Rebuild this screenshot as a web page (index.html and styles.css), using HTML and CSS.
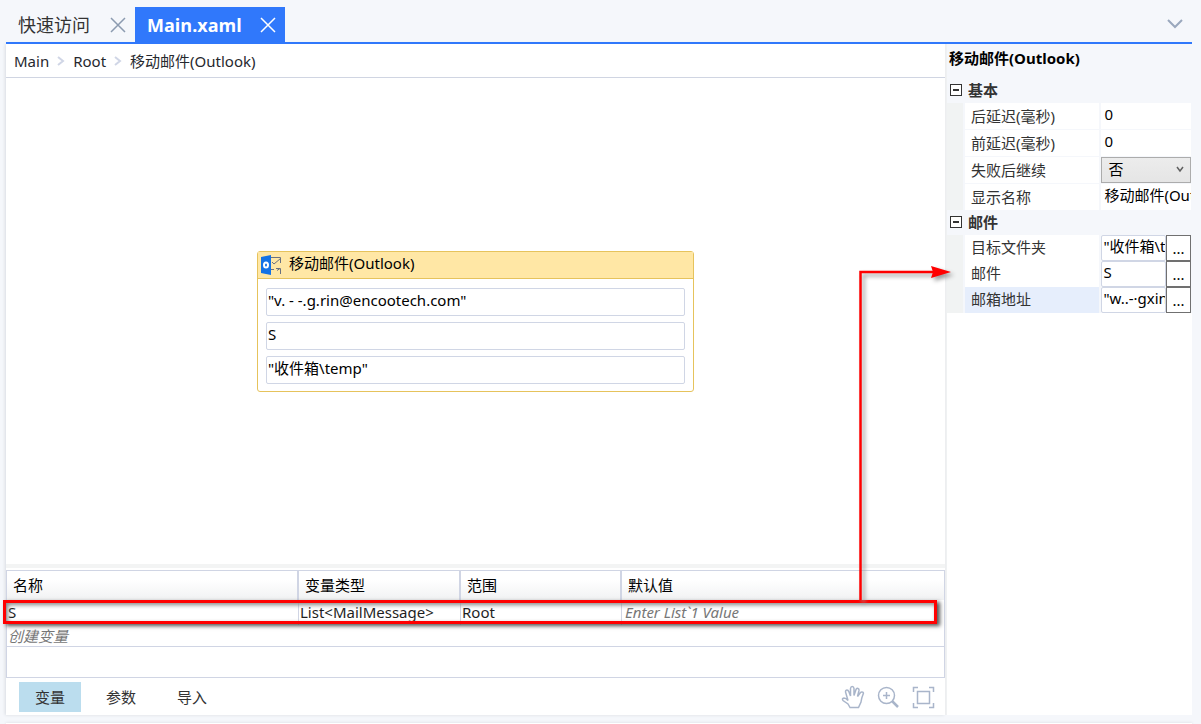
FILE: index.html
```html
<!DOCTYPE html>
<html lang="zh-CN">
<head>
<meta charset="utf-8">
<meta name="viewport" content="width=device-width, initial-scale=1">
<title>Main.xaml</title>
<link rel="stylesheet" href="styles.css">
</head>
<body>
<div class="app">
  <header class="tabs">
    <div class="tab">
      <button class="tab-name" type="button">快速访问</button>
      <button class="tab-close" type="button" aria-label="关闭快速访问"><svg width="16" height="16" viewBox="0 0 16 16"><path d="M1 1L15 15M15 1L1 15"/></svg></button>
    </div>
    <div class="tab tab-active">
      <button class="tab-name" type="button">Main.xaml</button>
      <button class="tab-close" type="button" aria-label="关闭Main.xaml"><svg width="16" height="16" viewBox="0 0 16 16"><path d="M1 1L15 15M15 1L1 15"/></svg></button>
    </div>
    <button class="tab-more" type="button" aria-label="更多标签"><svg width="16" height="10" viewBox="0 0 16 10"><path d="M1 1L8 8L15 1"/></svg></button>
  </header>

  <div class="body">
    <main class="workspace">
      <nav class="crumbs" aria-label="路径">
        <a href="#">Main</a>
        <svg class="crumb-sep" width="8" height="10" viewBox="0 0 8 10"><path d="M1 1L6 5L1 9"/></svg>
        <a href="#">Root</a>
        <svg class="crumb-sep" width="8" height="10" viewBox="0 0 8 10"><path d="M1 1L6 5L1 9"/></svg>
        <a href="#">移动邮件(Outlook)</a>
      </nav>

      <section class="canvas">
        <article class="activity">
          <h2 class="activity-head">
            <svg width="21" height="20" viewBox="0 0 21 20">
              <path d="M10 2.500H19.500V8M11 7L13 9L19.500 3.500M10 14.500H13M15 13.500H19.500V19M16 15.500L19 13.500" fill="none" stroke="#6b7280" stroke-width="1"/>
              <path d="M0 2L10 0V20L0 18Z" fill="#1473e6"/>
              <ellipse cx="5" cy="10" rx="2" ry="2.500" fill="none" stroke="#fff" stroke-width="2"/>
            </svg>
            <span>移动邮件(Outlook)</span>
          </h2>
          <div class="activity-body">
            <input class="field" type="text" aria-label="邮箱地址" value="&quot;v. - -.g.rin@encootech.com&quot;">
            <input class="field" type="text" aria-label="邮件" value="S">
            <input class="field" type="text" aria-label="目标文件夹" value="&quot;收件箱\temp&quot;">
          </div>
        </article>
      </section>

      <section class="variables">
        <table class="var-table">
          <colgroup><col class="col-name"><col class="col-type"><col class="col-scope"><col></colgroup>
          <thead><tr><th>名称</th><th>变量类型</th><th>范围</th><th>默认值</th></tr></thead>
          <tbody>
            <tr><td>S</td><td>List&lt;MailMessage&gt;</td><td>Root</td><td class="hint">Enter List`1 Value</td></tr>
            <tr class="create"><td class="hint" colspan="4">创建变量</td></tr>
            <tr class="blank"><td colspan="4"></td></tr>
          </tbody>
        </table>
        <div class="highlight"></div>
      </section>

      <footer class="bottom">
        <button class="pane pane-active" type="button">变量</button>
        <button class="pane" type="button">参数</button>
        <button class="pane" type="button">导入</button>
        <div class="tools">
          <button class="tool" type="button" aria-label="平移"><svg width="24" height="24" viewBox="0 0 24 24"><path d="M9 22.500L7 19L2 15.500Q0.500 13.500 3 13Q5 13 7 15.500L4.500 7Q4.500 5 6 5Q7.200 5 8 7L9.500 11L9.500 3.500Q9.800 1.500 11.200 1.500Q12.800 1.500 13 3.500V10.500L15 4.500Q15.500 3 17 3.500Q18.300 4 18 5.500L16.500 11.500L19.500 7.500Q20.500 6.500 21.800 7.200Q23 8 22 9.500Q20.500 13 20 17L17.500 22.500Z"/></svg></button>
          <button class="tool" type="button" aria-label="放大"><svg width="24" height="24" viewBox="0 0 24 24"><circle cx="10.500" cy="10.500" r="8"/><path d="M10.500 7V14M7 10.500H14"/><path d="M16 16L22 22" stroke-width="2.500"/></svg></button>
          <button class="tool" type="button" aria-label="适应屏幕"><svg width="24" height="24" viewBox="0 0 24 24"><path d="M2.500 7V2.500H7M18 2.500H22.500V7M22.500 18V22.500H18M7 22.500H2.500V18M6.500 6.500H18.500V18.500H6.500Z"/></svg></button>
        </div>
      </footer>

      <svg class="arrow" width="110" height="340" viewBox="0 0 110 340">
        <path d="M15.500 336V8H88" fill="none" stroke="#f00" stroke-width="2.500"/>
        <path d="M86 2L106 8L86 14L88 8Z" fill="#f00"/>
      </svg>
    </main>

    <aside class="props">
      <h1 class="props-title">移动邮件(Outlook)</h1>
      <section>
        <h3 class="group"><button class="fold" type="button" aria-label="折叠基本"></button>基本</h3>
        <div class="rows">
          <div class="row"><label for="p1">后延迟(毫秒)</label><input class="plain" id="p1" type="text" value="0"></div>
          <div class="row"><label for="p2">前延迟(毫秒)</label><input class="plain" id="p2" type="text" value="0"></div>
          <div class="row"><label for="p3">失败后继续</label>
            <div class="choice"><select id="p3"><option>否</option><option>是</option></select><svg width="8" height="8" viewBox="0 0 8 8"><path d="M1 1L4 5L7 1"/></svg></div></div>
          <div class="row"><label for="p4">显示名称</label><input class="plain" id="p4" type="text" value="移动邮件(Outlook)"></div>
        </div>
      </section>
      <section>
        <h3 class="group"><button class="fold" type="button" aria-label="折叠邮件"></button>邮件</h3>
        <div class="rows rows-tight">
          <div class="row"><label for="p5">目标文件夹</label><div class="expr"><input id="p5" type="text" value="&quot;收件箱\temp&quot;"><button type="button">...</button></div></div>
          <div class="row"><label for="p6">邮件</label><div class="expr"><input id="p6" type="text" value="S"><button type="button">...</button></div></div>
          <div class="row row-selected"><label for="p7">邮箱地址</label><div class="expr"><input id="p7" type="text" value="&quot;w..-·gxin@encootech.com&quot;"><button type="button">...</button></div></div>
        </div>
      </section>
      <div class="props-rest"></div>
    </aside>
  </div>
  <div class="next-panel"></div>
</div>
</body>
</html>
```

FILE: styles.css
```css
* { box-sizing: border-box; }

body {
  margin: 0;
  background: #f5f7fb;
  color: #1e1e1e;
  font: 15px/20px "Noto Sans", "Noto Sans CJK SC", sans-serif;
}

button, input, select { font: inherit; color: inherit; margin: 0; border-radius: 0; }
button { padding: 0; border: 0; background: none; }
svg { display: block; flex: none; fill: none; }
h1, h2, h3 { margin: 0; font-size: 15px; line-height: 20px; }

.app { display: flex; flex-direction: column; height: 100vh; min-height: 560px; overflow: hidden; }

/* Document tabs */
.tabs {
  position: relative;
  z-index: 1;
  display: flex;
  align-items: flex-end;
  height: 44px;
  margin: 0 9px 0 6px;
  border-bottom: 2px solid #3078fb;
}
.tab { display: flex; align-items: center; gap: 20px; height: 35px; padding: 0 9px 0 12px; font: 18px/24px "Open Sans", "Noto Sans CJK SC", sans-serif; color: #333; }
.tab-close svg { stroke: #8c9bb0; stroke-width: 1.5; }
.tab-active { gap: 18px; background: #3078fb; color: #fff; font-weight: 700; }
.tab-active .tab-close svg { stroke: #fff; }
.tab-more { margin: 0 9px 13px auto; }
.tab-more svg { stroke: #9aa8bd; stroke-width: 2; }

.body { display: flex; flex: 1; min-height: 0; margin: 0 9px 0 6px; }

/* Designer */
.workspace { position: relative; display: flex; flex-direction: column; flex: 1; min-width: 0; background: #fff; box-shadow: -1px 0 3px #d9dce2; }
.crumbs { display: flex; align-items: center; gap: 8px; height: 34px; padding: 0 8px; border-bottom: 1px solid #d0d5e2; }
.crumbs a { color: #26282e; text-decoration: none; }
.crumb-sep { stroke: #d0d6e6; stroke-width: 2; }
.canvas { display: flex; flex: 1; align-items: center; justify-content: center; min-height: 0; border-bottom: 4px solid #f3f4f4; }

.activity { width: 437px; border: 1px solid #e6c35c; border-radius: 3px; background: #fff; color: #000; }
.activity-head { display: flex; align-items: center; gap: 7px; height: 27px; padding: 0 3px; border-bottom: 1px solid #e6c35c; background: #ffe7a5; font-weight: 400; }
.activity-head span { padding-bottom: 3px; }
.activity-body { display: flex; flex-direction: column; gap: 6px; padding: 9px 8px 7px; }
.field { width: 100%; height: 28px; padding: 0 1px 4px; border: 1px solid #d0d6e5; border-radius: 2px; background: #fff; }

/* Variables */
.variables { position: relative; padding-top: 2px; }
.var-table { width: 100%; table-layout: fixed; border-collapse: separate; border-spacing: 0; border: 1px solid #d0d5e4; }
.col-name { width: 292px; }
.col-type { width: 162px; }
.col-scope { width: 161px; }
.var-table th { height: 29px; padding: 0 6px 2px; border-right: 2px solid #d0d5e4; background: linear-gradient(#fff 30%, #f1f2f3); color: #000; font-weight: 400; text-align: left; }
.var-table th:last-child { border-right-color: transparent; }
.var-table td { height: 25px; padding: 0 1px 2px; border-right: 1px solid #d0d5e4; white-space: nowrap; }
.var-table td:last-child { padding-left: 3px; border-right: 0; }
.var-table .create td { height: 22px; padding: 0 1px; border-bottom: 1px solid #d0d5e4; }
.var-table .blank td { height: 30px; }
.var-table .hint { color: #777; font-style: italic; }
.highlight { position: absolute; left: -3px; right: 8px; top: 32px; height: 24px; border: 3px solid #f00; box-shadow: 3px 2px 4px #555, inset 2px 2px 4px #888; }

.bottom { display: flex; align-items: center; gap: 9px; height: 37px; padding: 0 10px 0 13px; }
.pane { width: 62px; height: 30px; color: #333; }
.pane-active { background: #bbddee; }
.tools { display: flex; gap: 11px; margin-left: auto; }
.tool svg { stroke: #a9b5ca; stroke-width: 1.5; }

.arrow { position: absolute; right: -10px; bottom: 111px; z-index: 2; pointer-events: none; filter: drop-shadow(3px 3px 2px #999); }

/* Properties */
.props { display: flex; flex-direction: column; width: 247px; border-left: 2px solid #f1f2f3; color: #333; }
.props-title { padding: 4px 2px 10px; color: #000; }
.group { display: flex; align-items: center; gap: 6px; height: 25px; padding: 0 3px 2px; }
.fold { width: 12px; height: 12px; padding: 0; border: 1px solid #333; background: linear-gradient(#333, #333) center / 6px 2px no-repeat #fff; }
.rows { display: flex; flex-direction: column; gap: 1px; padding: 0 1px 0 2px; border-left: 16px solid #f1f3f3; }
.row { display: grid; grid-template-columns: 3fr 2fr; gap: 2px; height: 26px; }
.row label { padding: 3px 6px; background: #fff; white-space: nowrap; }
.row-selected label { background: #e6eefc; }
.row input { width: 100%; min-width: 0; background: #fff; color: #000; }
.plain { padding: 0 0 4px 3px; border: 0; }
.rows-tight { gap: 0; }
.rows-tight .row { border-bottom: 1px solid #f5f7fb; }
.rows-tight label { padding-top: 2px; }
.choice { position: relative; }
.choice select { width: 100%; height: 26px; padding: 0 6px 2px; border: 1px solid #acacac; background: linear-gradient(#ececec, #e5e5e5); color: #000; appearance: none; }
.choice svg { position: absolute; right: 7px; top: 9px; stroke: #606060; stroke-width: 1.5; pointer-events: none; }
.expr { display: flex; }
.expr input { flex: 1; padding: 0 0 4px 1px; border: 1px solid #d0d6e5; border-radius: 2px; }
.expr button { flex: none; width: 25px; border: 1px solid #707070; background: #fff; color: #000; }
.props-rest { flex: 1; background: #fff; }

.next-panel { height: 1px; margin: 8px 9px 0 6px; background: #fff; box-shadow: 0 0 3px #c5c8cc; }
```
